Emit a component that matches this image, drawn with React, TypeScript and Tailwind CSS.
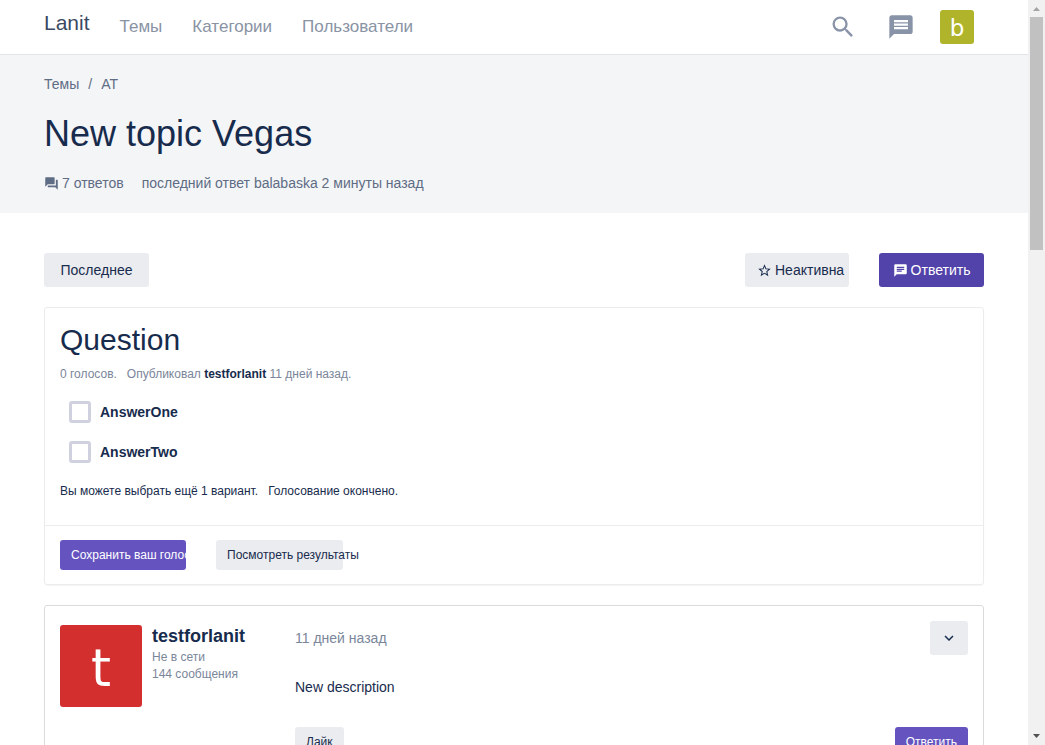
import { useState } from "react";
import {
  MdChat,
  MdExpandMore,
  MdForum,
  MdMessage,
  MdSearch,
  MdStarBorder,
} from "react-icons/md";

const navLinks = ["Темы", "Категории", "Пользователи"];
const answers = ["AnswerOne", "AnswerTwo"];

function Navbar() {
  return (
    <nav className="border-b border-[#e1e4e8] bg-white px-11 shadow-[0_1px_2px_rgba(0,0,0,0.06)]">
      <div className="flex h-[54px] items-center">
        <a href="#" className="mr-[30px] pb-2 text-[21px] leading-6 text-[#3b4963]">
          Lanit
        </a>
        <ul className="flex gap-[30px] text-[17px] leading-6 text-[#8993a4]">
          {navLinks.map((label) => (
            <li key={label}>
              <a href="#">{label}</a>
            </li>
          ))}
        </ul>
        <div className="ml-auto flex items-center pr-[10px] text-[#8993a8]">
          <button type="button" aria-label="Поиск" className="mr-[30px]">
            <MdSearch size={28} />
          </button>
          <button type="button" aria-label="Сообщения" className="mr-[25px]">
            <MdMessage size={28} />
          </button>
          <a
            href="#"
            className="flex size-[34px] items-center justify-center rounded-[3px] bg-[#afb42b] pt-[2px] font-['DejaVu_Sans',sans-serif] text-[23px] leading-8 text-white"
          >
            b
          </a>
        </div>
      </div>
    </nav>
  );
}

function PageHeader() {
  return (
    <header className="bg-[#f4f5f7] px-11 pt-[19px] pb-5 text-[14px] leading-5 text-[#5e6c84]">
      <ol className="flex gap-[9px]">
        <li>
          <a href="#">Темы</a>
        </li>
        <li aria-hidden="true">/</li>
        <li>
          <a href="#">AT</a>
        </li>
      </ol>
      <h1 className="mt-[18px] text-[36px] leading-[44px] text-[#172b4d]">New topic Vegas</h1>
      <div className="mt-[17px] flex gap-[18px]">
        <span className="flex items-center gap-[3px]">
          <MdForum size={15} />7 ответов
        </span>
        <span>последний ответ balabaska 2 минуты назад</span>
      </div>
    </header>
  );
}

function Toolbar() {
  return (
    <div className="flex text-[14px] leading-5">
      <button type="button" className="h-[34px] w-[105px] rounded-[3px] bg-[#ebecf0]">
        Последнее
      </button>
      <button
        type="button"
        className="mr-[30px] ml-auto flex h-[34px] w-[104px] items-center gap-[3px] rounded-[3px] bg-[#ebecf0] pl-3"
      >
        <MdStarBorder size={15} className="shrink-0" />
        Неактивна
      </button>
      <button
        type="button"
        className="flex h-[34px] w-[105px] items-center justify-center gap-[3px] rounded-[3px] bg-[#5243aa] text-white"
      >
        <MdChat size={15} />
        Ответить
      </button>
    </div>
  );
}

function Poll() {
  const [chosen, setChosen] = useState<string | null>(null);
  return (
    <section className="mt-5 rounded-[3px] border border-[#ebecee] shadow-[0_1px_1px_rgba(0,0,0,0.04)]">
      <div className="px-[15px] pt-[14px] pb-[25px] text-[12px] leading-[18px]">
        <h2 className="text-[30px] leading-9">Question</h2>
        <p className="mt-[7px] text-[#7a869a]">
          <span className="mr-[10px]">0 голосов.</span>
          <span>
            Опубликовал{" "}
            <a href="#" className="font-bold text-[#172b4d]">
              testforlanit
            </a>{" "}
            11 дней назад.
          </span>
        </p>
        <ul className="mt-[9px] mb-[10px]">
          {answers.map((answer) => (
            <li key={answer} className="h-10">
              <label className="flex h-10 w-fit items-center gap-[9px] pl-[9px] text-[14px] leading-5 font-bold">
                <input
                  type="checkbox"
                  checked={chosen === answer}
                  onChange={(event) => setChosen(event.target.checked ? answer : null)}
                  className="size-[22px] appearance-none rounded-[3px] border-3 border-[#cfd2de] checked:bg-[#6554c0]"
                />
                {answer}
              </label>
            </li>
          ))}
        </ul>
        <p>
          <span className="mr-[10px]">Вы можете выбрать ещё 1 вариант.</span>
          <span>Голосование окончено.</span>
        </p>
      </div>
      <div className="flex gap-[30px] border-t border-[#ebecee] px-[15px] py-[14px] text-[12px] leading-[18px] whitespace-nowrap">
        <button
          type="button"
          className="h-[30px] w-[126px] overflow-hidden rounded-[3px] bg-[#6554c0] pl-[11px] text-left text-white"
        >
          Сохранить ваш голос
        </button>
        <button
          type="button"
          className="h-[30px] w-[127px] rounded-[3px] bg-[#ebecf0] pl-[11px] text-left"
        >
          Посмотреть результаты
        </button>
      </div>
    </section>
  );
}

function Post() {
  return (
    <article className="mt-5 flex rounded-[3px] border border-[#dadbdd] px-[15px] pt-[15px] pb-4">
      <div className="flex w-[235px] shrink-0 gap-[10px] pt-1">
        <a
          href="#"
          className="flex size-[82px] items-center justify-center rounded-[3px] bg-[#d32f2f] pt-[6px] font-['DejaVu_Sans',sans-serif] text-[51px] leading-[76px] text-white"
        >
          t
        </a>
        <div className="text-[12px] leading-[17px] text-[#7a869a]">
          <a href="#" className="block text-[18px] leading-[22px] font-bold text-[#172b4d]">
            testforlanit
          </a>
          <p className="mt-[2px]">Не в сети</p>
          <p>144 сообщения</p>
        </div>
      </div>
      <div className="grow text-[14px] leading-5">
        <div className="flex items-center justify-between">
          <a href="#" className="text-[#7a869a]">
            11 дней назад
          </a>
          <button
            type="button"
            aria-label="Действия"
            className="flex h-[34px] w-[38px] items-center justify-center rounded-[3px] bg-[#ebecf0]"
          >
            <MdExpandMore size={18} />
          </button>
        </div>
        <p className="mt-[22px]">New description</p>
        <div className="mt-[30px] flex justify-between text-[12px] leading-[18px]">
          <button type="button" className="h-[30px] rounded-[3px] bg-[#ebecf0] px-[11px]">
            Лайк
          </button>
          <button type="button" className="h-[30px] rounded-[3px] bg-[#6554c0] px-[11px] text-white">
            Ответить
          </button>
        </div>
      </div>
    </article>
  );
}

function Scrollbar() {
  return (
    <div
      aria-hidden="true"
      className="flex w-[17px] shrink-0 flex-col items-center justify-between bg-[#f1f1f1]"
    >
      <div className="flex w-full grow flex-col items-center">
        <svg width="17" height="17" viewBox="0 0 17 17" className="shrink-0">
          <path d="M5 11h7L8.500 7z" fill="#a3a3a3" />
        </svg>
        <div className="h-[233px] w-[13px] shrink-0 bg-[#c1c1c1]" />
      </div>
      <svg width="17" height="17" viewBox="0 0 17 17" className="shrink-0">
        <path d="M5 6h7L8.500 10z" fill="#505050" />
      </svg>
    </div>
  );
}

export default function App() {
  return (
    <div className="flex h-screen overflow-hidden bg-white font-['Liberation_Sans',Arial,sans-serif] text-[#172b4d]">
      <div className="min-w-0 grow overflow-hidden">
        <Navbar />
        <PageHeader />
        <main className="px-11 pt-10">
          <Toolbar />
          <Poll />
          <Post />
        </main>
      </div>
      <Scrollbar />
    </div>
  );
}
